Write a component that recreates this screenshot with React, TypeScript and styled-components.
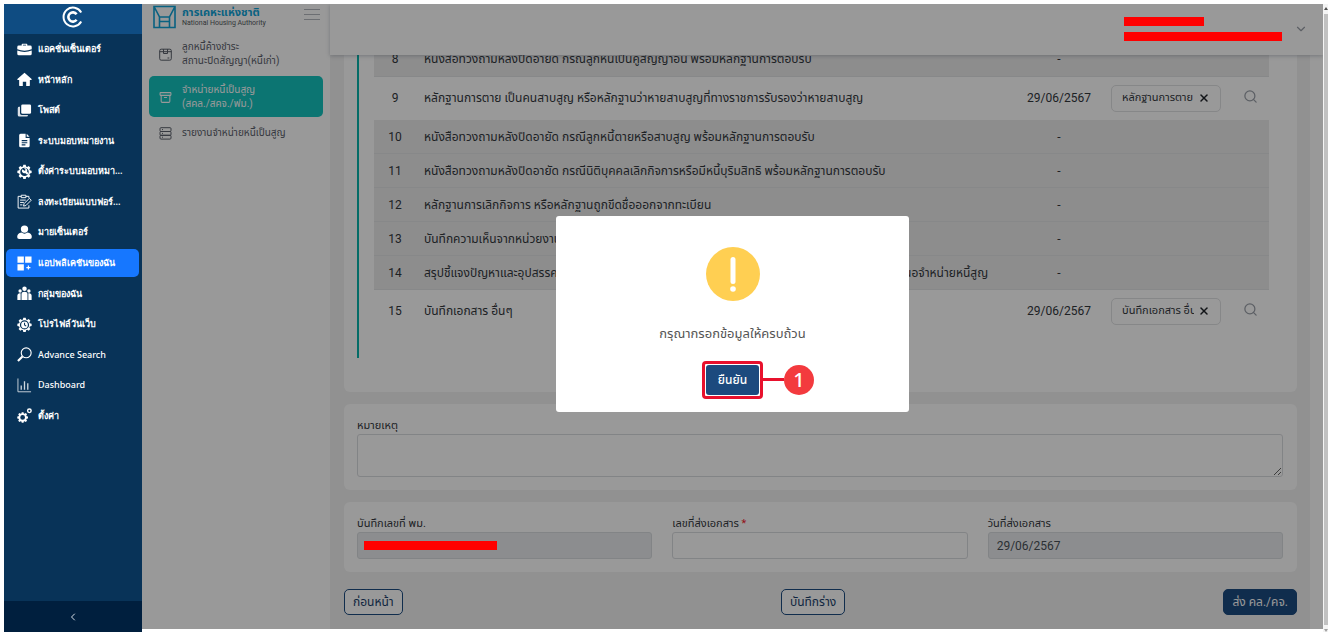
import React from "react";
import styled, { createGlobalStyle, css } from "styled-components";
import { Archive, ChevronDown, ChevronLeft, Search, X } from "lucide-react";

const GlobalStyle = createGlobalStyle`
  *, *::before, *::after { box-sizing: border-box; }
  body {
    margin: 0;
    background: #fff;
    font-family: Roboto, "Noto Sans Thai", "Noto Sans", sans-serif;
    font-size: 11px;
    line-height: 16px;
    color: #33373d;
  }
  button, input, textarea { font: inherit; color: inherit; }
  ul { list-style: none; margin: 0; padding: 0; }
  a { color: inherit; text-decoration: none; }
`;

const Page = styled.div`
  display: flex;
  height: 100vh;
  min-height: 480px;
  padding: 4px 4px 2px;
`;

/* Primary navigation */

const Nav = styled.nav`
  display: flex;
  flex-direction: column;
  width: 138px;
  flex: none;
  background: #083358;
  color: #fff;
`;

const NavBrand = styled.div`
  display: grid;
  place-items: center;
  height: 30px;
  padding-bottom: 4px;
  flex: none;
  background: #0f4c82;
`;

const NavList = styled.ul`
  display: grid;
  grid-auto-rows: 1fr;
  height: 397px;
  flex: none;
`;

const NavItem = styled.li`
  display: flex;
  align-items: center;
  padding: 0 3px 0 2px;
`;

const NavLink = styled.a<{ $active?: boolean; $latin?: boolean }>`
  display: flex;
  align-items: center;
  gap: 6px;
  width: 100%;
  height: 28px;
  padding-left: 11px;
  border-radius: 5px;
  font-family: "Noto Sans", sans-serif;
  font-size: 9px;
  font-weight: ${(p) => (p.$latin ? 500 : 600)};
  white-space: nowrap;
  background: ${(p) => (p.$active ? "#1677ff" : "transparent")};
  svg { flex: none; }
`;

const NavToggle = styled.button`
  display: grid;
  place-items: center;
  height: 31px;
  margin-top: auto;
  padding: 0;
  border: 0;
  background: #001f3e;
  color: #d5dde6;
`;

/* Application area covered by the dialog backdrop */

const Shell = styled.div`
  position: relative;
  display: flex;
  flex: 1;
  min-width: 0;
  margin-bottom: 3px;
  overflow: hidden;
`;

const Side = styled.aside`
  width: 188px;
  flex: none;
  padding: 0 7px;
  background: #fff;
`;

const SideHead = styled.div`
  display: flex;
  align-items: flex-start;
  gap: 6px;
  height: 29px;
  padding: 1px 3px 0 4px;
`;

const SideTitle = styled.div`
  display: flex;
  flex-direction: column;
  flex: 1;
  padding-top: 1px;
  color: #0fa3d8;
  font-size: 11px;
  font-weight: 700;
  line-height: 13px;
  white-space: nowrap;
  small {
    color: #555b61;
    font-size: 7px;
    font-weight: 400;
    line-height: 8px;
  }
`;

const IconButton = styled.button`
  display: inline-grid;
  place-items: center;
  padding: 0;
  border: 0;
  background: none;
  color: #9a9fa8;
`;

const MenuButton = styled(IconButton)`
  padding-top: 4px;
  color: #b4b8be;
`;

const SideList = styled.ul`
  display: flex;
  flex-direction: column;
  gap: 2px;
`;

const SideLink = styled.a<{ $active?: boolean }>`
  display: flex;
  align-items: center;
  gap: 10px;
  padding: 7px 10px 6px;
  border-radius: 5px;
  font-size: 10px;
  line-height: 14px;
  color: ${(p) => (p.$active ? "#fff" : "#5b606b")};
  background: ${(p) => (p.$active ? "#14c3bf" : "transparent")};
  svg { flex: none; }
`;

const Main = styled.main`
  display: flex;
  flex-direction: column;
  flex: 1;
  min-width: 0;
  background: #fff;
`;

const TopBar = styled.header`
  position: relative;
  display: flex;
  align-items: center;
  justify-content: flex-end;
  gap: 12px;
  height: 51px;
  flex: none;
  padding: 0 15px 2px 0;
  background: #fff;
  box-shadow: 0 1px 4px rgba(60, 70, 90, 0.3);
`;

const UserLines = styled.div`
  display: flex;
  flex-direction: column;
  gap: 6px;
  width: 158px;
`;

const Redaction = styled.span<{ $width: number }>`
  position: relative;
  z-index: 2;
  display: block;
  width: ${(p) => p.$width}px;
  height: 9px;
  background: #ff0000;
`;

const Viewport = styled.div`
  display: flex;
  flex-direction: column;
  justify-content: flex-end;
  flex: 1;
  min-height: 0;
  margin-right: 13px;
  padding: 0 13px 14px 14px;
  overflow: hidden;
  background: #f2f2f2;
`;

const Card = styled.section`
  flex: none;
  margin-bottom: 12px;
  padding: 14px 14px 13px 13px;
  border-radius: 6px;
  background: #fff;
`;

const Step = styled.div`
  margin-bottom: 21px;
  padding: 0 14px 25px 15px;
  border-left: 2px solid #08b5ac;
`;

const DocTable = styled.table`
  width: 100%;
  border-collapse: collapse;
  table-layout: fixed;
`;

const DocRow = styled.tr<{ $filled?: boolean }>`
  height: ${(p) => (p.$filled ? 43 : 34)}px;
  background: ${(p) => (p.$filled ? "#fff" : "#ececec")};
  border-bottom: 1px solid ${(p) => (p.$filled ? "#fff" : "#e2e3e4")};
`;

const cellBase = css`
  padding: 0;
  white-space: nowrap;
`;

const Cell = styled.td<{ $center?: boolean }>`
  ${cellBase}
  padding-left: ${(p) => (p.$center ? 0 : 8)}px;
  text-align: ${(p) => (p.$center ? "center" : "left")};
  font-size: 12px;
`;

const Chip = styled.span`
  display: inline-flex;
  align-items: center;
  gap: 4px;
  width: 110px;
  height: 27px;
  padding: 0 10px;
  border: 1px solid #e0e1e3;
  border-radius: 5px;
  font-size: 11px;
  vertical-align: middle;
  button { color: #1f2328; }
`;

const ChipText = styled.span`
  flex: 1;
  overflow: hidden;
  text-align: left;
`;

const Label = styled.label`
  display: block;
  font-size: 11px;
  line-height: 16px;
`;

const Required = styled.span`
  color: #f5222d;
`;

const fieldBase = css`
  display: block;
  width: 100%;
  border: 1px solid #d9dcdf;
  border-radius: 3px;
  background: #fff;
`;

const NoteArea = styled.textarea`
  ${fieldBase}
  height: 43px;
`;

const Fields = styled.div`
  display: grid;
  grid-template-columns: repeat(3, 1fr);
  gap: 20px;
`;

const FieldBox = styled.div`
  position: relative;
`;

const TextInput = styled.input`
  ${fieldBase}
  height: 27px;
  padding: 0 8px;
  font-size: 12px;
  &:read-only { background: #e9ecef; color: #495057; }
`;

const FieldMask = styled.div`
  position: absolute;
  left: 7px;
  bottom: 9px;
`;

const Actions = styled.footer`
  display: flex;
  justify-content: space-between;
  flex: none;
  margin-top: 5px;
`;

const ActionButton = styled.button<{ $primary?: boolean }>`
  height: 26px;
  padding: 0 8px;
  border: 1px solid #1b4b80;
  border-radius: 5px;
  font-size: 12px;
  white-space: nowrap;
  color: ${(p) => (p.$primary ? "#fff" : "#1b3f6b")};
  background: ${(p) => (p.$primary ? "#1b4b80" : "#fff")};
`;

/* Dialog */

const Backdrop = styled.div`
  position: absolute;
  inset: 0;
  z-index: 1;
  display: grid;
  place-items: center;
  padding-bottom: 6px;
  background: rgba(0, 0, 0, 0.4);
`;

const Dialog = styled.div`
  display: flex;
  flex-direction: column;
  align-items: center;
  width: 353px;
  padding: 31px 16px 17px;
  border-radius: 3px;
  background: #fff;
`;

const Message = styled.p`
  margin: 23px 0 21px;
  font-size: 13px;
  line-height: 20px;
  color: #545454;
`;

const ConfirmWrap = styled.div`
  position: relative;
`;

const ConfirmButton = styled.button`
  display: block;
  width: 53px;
  height: 30px;
  padding: 0;
  border: 0;
  border-radius: 3px;
  background: #1c4a7e;
  color: #fff;
  font-size: 12px;
  font-weight: 500;
`;

const Highlight = styled.span`
  position: absolute;
  inset: -4px;
  border: 3px solid #e8112d;
  border-radius: 4px;
  pointer-events: none;
`;

const Callout = styled.span`
  position: absolute;
  top: 0;
  left: 56px;
  display: flex;
  align-items: center;
  &::before {
    content: "";
    width: 22px;
    height: 3px;
    background: #e8112d;
  }
`;

const CalloutNumber = styled.b`
  display: grid;
  place-items: center;
  width: 30px;
  height: 30px;
  border-radius: 50%;
  background: #f33a3e;
  color: #fff;
  font-family: "Noto Sans", sans-serif;
  font-size: 20px;
  font-weight: 500;
`;

/* Window scrollbar */

const ScrollTrack = styled.div`
  display: flex;
  flex-direction: column;
  align-items: center;
  gap: 4px;
  width: 5px;
  flex: none;
  padding: 3px 0 0 1px;
  background: #f4f4f4;
  svg { flex: none; }
`;

const ScrollThumb = styled.div`
  flex: 1;
  width: 4px;
  background: #c1c1c1;
`;

/* Icons */

const Svg = ({ children, size = 15 }: { children: React.ReactNode; size?: number }) => (
  <svg width={size} height={size} viewBox="0 0 16 16" fill="currentColor" aria-hidden="true">
    {children}
  </svg>
);

const GEAR =
  "M6.7.8h2.6l.4 1.9 1.1.5 1.7-1.1 1.8 1.8-1.1 1.7.5 1.1 1.9.4v2.6l-1.9.4-.5 1.1 1.1 1.7-1.8 1.8-1.7-1.1-1.1.5-.4 1.9H6.7l-.4-1.9-1.1-.5-1.7 1.1-1.8-1.8 1.1-1.7-.5-1.1L.4 9.7V7.1l1.9-.4.5-1.1-1.1-1.7 1.8-1.8 1.7 1.1 1.1-.5z";

const icons: Record<string, React.ReactNode> = {
  briefcase: (
    <Svg>
      <path d="M5 3.700V2.600Q5 1.800 5.800 1.800h4.400q.8 0 .8.8v1.100h3q1.700 0 1.700 1.500v2.600Q8 10.600.3 7.800V5.200Q.3 3.700 2 3.700zm1.300 0h3.400V3H6.300z" />
      <path d="M.3 9.100q7.700 2.900 15.400 0v3.400q0 1.700-1.700 1.700H2q-1.700 0-1.700-1.700z" />
    </Svg>
  ),
  home: (
    <Svg>
      <path d="M8 .8L.4 7.500q-.4.9.5 1H2.300V14q0 1 1 1h2.900v-4.500h3.600V15h2.900q1 0 1-1V8.500h1.400q.9-.1.500-1z" />
    </Svg>
  ),
  layers: (
    <Svg>
      <rect x="4.500" y="1.500" width="10.500" height="10" rx="1.500" />
      <path d="M3.200 4H2.200Q.8 4 .8 5.500v7.300q0 1.700 1.700 1.700h7.800q1.400 0 1.400-1.700H5q-1.800 0-1.800-1.800z" opacity=".85" />
    </Svg>
  ),
  document: (
    <Svg>
      <path
        fillRule="evenodd"
        d="M3.800.8h5.400v4.400h4.300v8.300q0 1.700-1.700 1.700h-8q-1.500 0-1.500-1.700V2.500q0-1.700 1.500-1.700zM5 7.500v1.200h6V7.500zm0 2.300V11h6V9.800zm0 2.300v1.200h4v-1.200z"
      />
      <path d="M10.300.9l3.100 3.200h-3.100z" />
    </Svg>
  ),
  gearWrench: (
    <Svg>
      <path fillRule="evenodd" d={`${GEAR}M8 3.900a4.500 4.500 0 1 0 0 9a4.500 4.500 0 1 0 0-9z`} />
      <path d="M6 5.600l1.700 1.600 1.200-.2.1-1.200-1.500-1.500a3 3 0 0 1 3.300 4l1.500 1.600-1.500 1.500-1.700-1.600a3 3 0 0 1-3.900-3.200z" />
    </Svg>
  ),
  clipboard: (
    <Svg>
      <g fill="none" stroke="currentColor" strokeWidth="1">
        <path d="M4.500 2.500H1.200v12.500h11.500v-3M9.500 2.500h3.200v2M4.500 1.300h5v2.600h-5z" />
        <path d="M3.300 6.500h6M3.300 9h4M3.300 11.600h2.500M7.500 10.300l5.700-5.700 2 2-5.700 5.700-2.500.6z" />
      </g>
    </Svg>
  ),
  person: (
    <Svg>
      <circle cx="8" cy="4.300" r="3.900" />
      <path d="M4.800 8.100q3.200 2.300 6.400 0 4.600.8 4.600 4.800 0 2.100-2.100 2.100H2.300Q.2 15 .2 12.900.2 8.900 4.800 8.100z" />
    </Svg>
  ),
  apps: (
    <Svg>
      <path d="M.5.500h6.800v6.800H.5zM8.700.5h6.800v6.800H8.700zM.5 8.700h6.800v6.800H.5zM11.500 10.200h1.300v1.500h1.500v1.300h-1.500v1.500h-1.300V13H10v-1.300h1.500z" />
    </Svg>
  ),
  group: (
    <Svg>
      <circle cx="8" cy="3" r="2.400" />
      <circle cx="3.300" cy="5.300" r="1.800" />
      <circle cx="12.700" cy="5.300" r="1.800" />
      <path d="M4.800 14.800V8.600Q5 6 8 6t3.200 2.600v6.200zM.4 14.800V10Q.5 7.800 2.600 7.600h1.300v7.200zM12.100 14.800V7.600h1.300q2.100.2 2.200 2.400v4.800z" />
    </Svg>
  ),
  gearClock: (
    <Svg>
      <path fillRule="evenodd" d={`${GEAR}M8 3.500a4.900 4.900 0 1 0 0 9.800a4.900 4.900 0 1 0 0-9.800z`} />
      <path fillRule="evenodd" d="M8 4.800a3.600 3.600 0 1 1 0 7.200a3.600 3.600 0 1 1 0-7.200zM7.500 6v2.800l2 1.300.6-.8-1.500-1V6z" />
    </Svg>
  ),
  search: (
    <Svg>
      <g fill="none" stroke="currentColor">
        <circle cx="9.800" cy="6.200" r="5.300" strokeWidth="1.200" />
        <path d="M5.800 10.200L1 15" strokeWidth="2.200" />
      </g>
    </Svg>
  ),
  chart: (
    <Svg>
      <g fill="none" stroke="currentColor" opacity=".8">
        <path d="M1 .5v14.200h14" />
        <path d="M4.500 8v4.500M8 3.500v9M11.500 5.500v7" strokeWidth="1.400" />
      </g>
    </Svg>
  ),
  settings: (
    <Svg>
      <g transform="translate(0 3.800) scale(.75)">
        <path fillRule="evenodd" d={`${GEAR}M8 5a3.400 3.400 0 1 0 0 6.800a3.400 3.400 0 1 0 0-6.800z`} />
      </g>
      <circle cx="13.200" cy="3" r="1.900" fill="none" stroke="currentColor" strokeWidth="1.500" />
    </Svg>
  ),
};

const BrandMark = () => (
  <svg width="22" height="22" viewBox="0 0 22 22" fill="none" stroke="#fff" aria-hidden="true">
    <path d="M19.200 6.500A9.400 9.400 0 1 0 19.200 15.500" strokeWidth="2" />
    <path d="M14.600 8.200A4.600 4.600 0 1 0 14.600 13.800" strokeWidth="2.600" />
  </svg>
);

const AuthorityLogo = () => (
  <svg width="23" height="24" viewBox="0 0 23 24" fill="none" stroke="#0fa3d8" strokeWidth="1.600" aria-hidden="true">
    <path d="M1 1.500h21v21H1zM1 1.500l5.500 10.500v10.500M22 1.500l-5.500 10.500v10.500M6.500 12h10M6.500 16.500h10" />
  </svg>
);

const MenuIcon = () => (
  <svg width="16" height="11" viewBox="0 0 16 11" fill="none" stroke="currentColor" aria-hidden="true">
    <path d="M0 .5h16M0 5.500h16M0 10.500h16" />
  </svg>
);

const BoxIcon = () => (
  <svg width="13" height="13" viewBox="0 0 13 13" fill="none" stroke="currentColor" aria-hidden="true">
    <rect x=".7" y="1.200" width="11.600" height="11" rx="1.500" />
    <path d="M.7 3.700h11.600M4.500 1.200v4.300h4V1.200M8.500 10h1.800" />
  </svg>
);

const DrawersIcon = () => (
  <svg width="13" height="13" viewBox="0 0 13 13" fill="none" stroke="currentColor" aria-hidden="true">
    <rect x="1" y=".7" width="11" height="3.800" rx="1" />
    <rect x="1" y="4.500" width="11" height="3.800" rx="1" />
    <rect x="1" y="8.300" width="11" height="3.800" rx="1" />
    <path d="M3 2.600h1M3 6.400h1M3 10.200h1" />
  </svg>
);

const WarningIcon = () => (
  <svg width="54" height="54" viewBox="0 0 54 54" aria-hidden="true">
    <circle cx="27" cy="27" r="27" fill="#ffcf52" />
    <path d="M27 12.500v22" stroke="#fff" strokeWidth="5" strokeLinecap="round" />
    <circle cx="27" cy="42" r="2.800" fill="#fff" />
  </svg>
);

/* Data */

const navItems = [
  { icon: "briefcase", label: "แอคชั่นเซ็นเตอร์" },
  { icon: "home", label: "หน้าหลัก" },
  { icon: "layers", label: "โพสต์" },
  { icon: "document", label: "ระบบมอบหมายงาน" },
  { icon: "gearWrench", label: "ตั้งค่าระบบมอบหมา..." },
  { icon: "clipboard", label: "ลงทะเบียนแบบฟอร์..." },
  { icon: "person", label: "มายเซ็นเตอร์" },
  { icon: "apps", label: "แอปพลิเคชันของฉัน", active: true },
  { icon: "group", label: "กลุ่มของฉัน" },
  { icon: "gearClock", label: "โปรไฟล์วันเว็บ" },
  { icon: "search", label: "Advance Search", latin: true },
  { icon: "chart", label: "Dashboard", latin: true },
  { icon: "settings", label: "ตั้งค่า" },
];

const documents = [
  { no: 8, name: "หนังสือทวงถามหลังปิดอายัด กรณีลูกหนี้เป็นคู่สัญญาอื่น พร้อมหลักฐานการตอบรับ" },
  {
    no: 9,
    name: "หลักฐานการตาย เป็นคนสาบสูญ หรือหลักฐานว่าหายสาบสูญที่ทางราชการรับรองว่าหายสาบสูญ",
    date: "29/06/2567",
    file: "หลักฐานการตาย",
  },
  { no: 10, name: "หนังสือทวงถามหลังปิดอายัด กรณีลูกหนี้ตายหรือสาบสูญ พร้อมหลักฐานการตอบรับ" },
  { no: 11, name: "หนังสือทวงถามหลังปิดอายัด กรณีนิติบุคคลเลิกกิจการหรือมีหนี้บุริมสิทธิ พร้อมหลักฐานการตอบรับ" },
  { no: 12, name: "หลักฐานการเลิกกิจการ หรือหลักฐานถูกขีดชื่อออกจากทะเบียน" },
  { no: 13, name: "บันทึกความเห็นจากหน่วยงาน" },
  {
    no: 14,
    name: "สรุปชี้แจงปัญหาและอุปสรรคในการติดตามหนี้ของหน่วยงาน พร้อมทั้งเหตุผลและความจำเป็นที่ต้องขอเสนอจำหน่ายหนี้สูญ",
  },
  { no: 15, name: "บันทึกเอกสาร อื่นๆ", date: "29/06/2567", file: "บันทึกเอกสาร อื่นๆ" },
];

export default function App() {
  return (
    <>
      <GlobalStyle />
      <Page>
        <Nav>
          <NavBrand>
            <BrandMark />
          </NavBrand>
          <NavList>
            {navItems.map((item) => (
              <NavItem key={item.label}>
                <NavLink href="#" $active={item.active} $latin={item.latin}>
                  {icons[item.icon]}
                  {item.label}
                </NavLink>
              </NavItem>
            ))}
          </NavList>
          <NavToggle aria-label="ย่อเมนู">
            <ChevronLeft size={12} />
          </NavToggle>
        </Nav>

        <Shell>
          <Side>
            <SideHead>
              <AuthorityLogo />
              <SideTitle>
                การเคหะแห่งชาติ
                <small>National Housing Authority</small>
              </SideTitle>
              <MenuButton aria-label="เมนู">
                <MenuIcon />
              </MenuButton>
            </SideHead>
            <SideList>
              <li>
                <SideLink href="#">
                  <BoxIcon />
                  <span>
                    ลูกหนี้ค้างชำระ
                    <br />
                    สถานะปิดสัญญา(หนี้เก่า)
                  </span>
                </SideLink>
              </li>
              <li>
                <SideLink href="#" $active>
                  <Archive size={13} />
                  <span>
                    จำหน่ายหนี้เป็นสูญ
                    <br />
                    (สคล./สคจ./ฟม.)
                  </span>
                </SideLink>
              </li>
              <li>
                <SideLink href="#">
                  <DrawersIcon />
                  <span>รายงานจำหน่ายหนี้เป็นสูญ</span>
                </SideLink>
              </li>
            </SideList>
          </Side>

          <Main>
            <TopBar>
              <UserLines>
                <Redaction $width={80} />
                <Redaction $width={158} />
              </UserLines>
              <IconButton aria-label="บัญชีผู้ใช้">
                <ChevronDown size={14} strokeWidth={2} />
              </IconButton>
            </TopBar>

            <Viewport>
              <Card>
                <Step>
                  <DocTable>
                    <colgroup>
                      <col width="42" />
                      <col />
                      <col width="82" />
                      <col width="132" />
                      <col width="37" />
                    </colgroup>
                    <tbody>
                      {documents.map((d) => (
                        <DocRow key={d.no} $filled={!!d.file}>
                          <Cell $center>{d.no}</Cell>
                          <Cell>{d.name}</Cell>
                          <Cell $center>{d.date ?? "-"}</Cell>
                          <Cell $center>
                            {d.file && (
                              <Chip>
                                <ChipText>{d.file}</ChipText>
                                <IconButton aria-label={`ลบ ${d.file}`}>
                                  <X size={12} strokeWidth={3} />
                                </IconButton>
                              </Chip>
                            )}
                          </Cell>
                          <Cell $center>
                            {d.file && (
                              <IconButton aria-label={`ดู ${d.file}`}>
                                <Search size={15} strokeWidth={2} />
                              </IconButton>
                            )}
                          </Cell>
                        </DocRow>
                      ))}
                    </tbody>
                  </DocTable>
                </Step>
              </Card>

              <Card>
                <Label htmlFor="note">หมายเหตุ</Label>
                <NoteArea id="note" />
              </Card>

              <Card>
                <Fields>
                  <FieldBox>
                    <Label htmlFor="memo-no">บันทึกเลขที่ พม.</Label>
                    <TextInput id="memo-no" readOnly />
                    <FieldMask>
                      <Redaction $width={133} />
                    </FieldMask>
                  </FieldBox>
                  <FieldBox>
                    <Label htmlFor="send-no">
                      เลขที่ส่งเอกสาร <Required>*</Required>
                    </Label>
                    <TextInput id="send-no" />
                  </FieldBox>
                  <FieldBox>
                    <Label htmlFor="send-date">วันที่ส่งเอกสาร</Label>
                    <TextInput id="send-date" readOnly value="29/06/2567" />
                  </FieldBox>
                </Fields>
              </Card>

              <Actions>
                <ActionButton>ก่อนหน้า</ActionButton>
                <ActionButton>บันทึกร่าง</ActionButton>
                <ActionButton $primary>ส่ง คล./คจ.</ActionButton>
              </Actions>
            </Viewport>
          </Main>

          <Backdrop>
            <Dialog role="dialog" aria-modal="true" aria-labelledby="dialog-message">
              <WarningIcon />
              <Message id="dialog-message">กรุณากรอกข้อมูลให้ครบถ้วน</Message>
              <ConfirmWrap>
                <ConfirmButton>ยืนยัน</ConfirmButton>
                <Highlight />
                <Callout>
                  <CalloutNumber>1</CalloutNumber>
                </Callout>
              </ConfirmWrap>
            </Dialog>
          </Backdrop>
        </Shell>

        <ScrollTrack aria-hidden="true">
          <svg width="4" height="3" viewBox="0 0 4 3">
            <path d="M2 0l2 3H0z" fill="#505050" />
          </svg>
          <ScrollThumb />
          <svg width="4" height="3" viewBox="0 0 4 3">
            <path d="M2 3l2-3H0z" fill="#a0a0a0" />
          </svg>
        </ScrollTrack>
      </Page>
    </>
  );
}
